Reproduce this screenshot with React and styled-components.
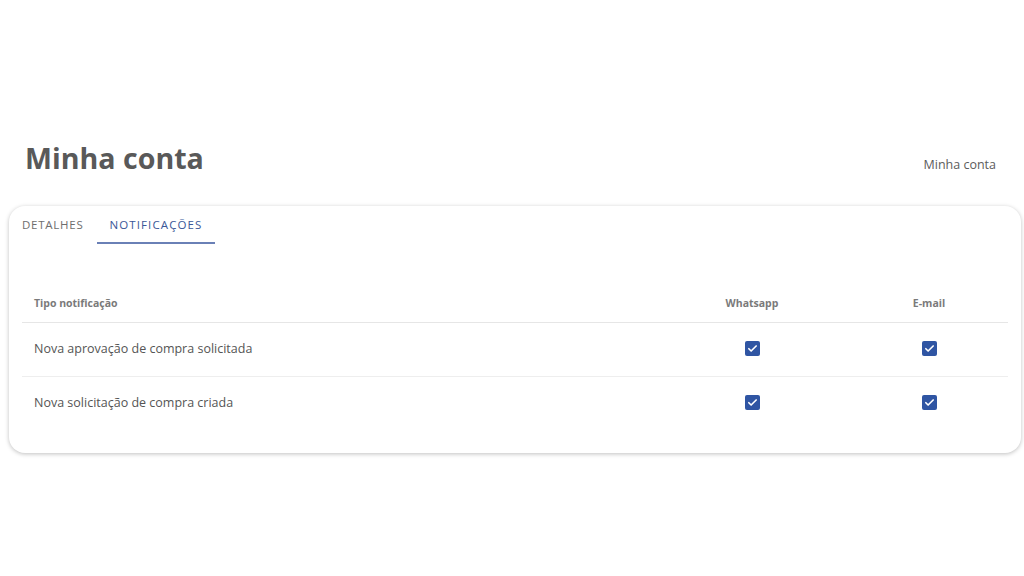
import styled, { createGlobalStyle } from 'styled-components'

const GlobalStyle = createGlobalStyle`
  html, body {
    margin: 0;
    padding: 0;
    background: #ffffff;
    font-family: 'Open Sans', 'Liberation Sans', sans-serif;
  }
`

const rows = [
  { label: 'Nova aprovação de compra solicitada', whatsapp: true, email: true },
  { label: 'Nova solicitação de compra criada', whatsapp: true, email: true },
]

const CheckIcon = () => (
  <svg width='11' height='11' viewBox='0 0 24 24' fill='none'>
    <path
      d='M4 12.5l5 5L20 6.5'
      stroke='#ffffff'
      strokeWidth='3.6'
      strokeLinecap='round'
      strokeLinejoin='round'
    />
  </svg>
)

const App = () => {
  return (
    <Page>
      <GlobalStyle />
      <Header>
        <Title>Minha conta</Title>
        <Breadcrumb>Minha conta</Breadcrumb>
      </Header>
      <Card>
        <Tabs>
          <Tab>DETALHES</Tab>
          <Tab active>NOTIFICAÇÕES</Tab>
        </Tabs>
        <Table>
          <HeadRow>
            <HeadCell>Tipo notificação</HeadCell>
            <HeadCell center>Whatsapp</HeadCell>
            <HeadCell center>E-mail</HeadCell>
          </HeadRow>
          {rows.map((row, i) => (
            <Row key={row.label} last={i === rows.length - 1}>
              <Cell>{row.label}</Cell>
              <Cell center>
                <Checkbox>{row.whatsapp && <CheckIcon />}</Checkbox>
              </Cell>
              <Cell center>
                <Checkbox>{row.email && <CheckIcon />}</Checkbox>
              </Cell>
            </Row>
          ))}
        </Table>
      </Card>
    </Page>
  )
}

export default App

const Page = styled.div`
  width: 1024px;
  height: 576px;
  box-sizing: border-box;
  padding: 135px 3px 0 9px;
`
const Header = styled.div`
  display: flex;
  justify-content: space-between;
  align-items: center;
  padding: 0 25px 0 16px;
  height: 44px;
`
const Title = styled.h1`
  margin: 0;
  font-size: 28.6px;
  font-weight: 700;
  color: #595959;
`
const Breadcrumb = styled.span`
  font-size: 12.5px;
  color: #5c5c5c;
  margin-top: 14px;
`
const Card = styled.div`
  margin-top: 27px;
  background: #ffffff;
  border-radius: 16px;
  box-shadow: 0 1px 4px rgba(0, 0, 0, 0.25);
  padding: 0 13px 22px 13px;
`
const Tabs = styled.div`
  display: flex;
  height: 38px;
  margin-left: -13px;
`
const Tab = styled.div`
  display: flex;
  align-items: center;
  justify-content: center;
  padding: 1px 13px 0 13px;
  font-size: 11.5px;
  font-weight: 500;
  letter-spacing: ${(p) => (p.active ? '1.1px' : '0.75px')};
  color: ${(p) => (p.active ? '#3a5798' : '#6e6e6e')};
  border-bottom: 2px solid ${(p) => (p.active ? '#6a80b6' : 'transparent')};
  box-sizing: border-box;
`
const Table = styled.div`
  margin-top: 40px;
`
const grid = `
  display: grid;
  grid-template-columns: 1fr 196px 158px;
  align-items: center;
  padding-left: 12px;
`
const HeadRow = styled.div`
  ${grid}
  height: 38px;
  border-bottom: 1px solid #e6e6e6;
`
const HeadCell = styled.div`
  font-size: 10.5px;
  font-weight: 700;
  color: #7a7a7a;
  text-align: ${(p) => (p.center ? 'center' : 'left')};
`
const Row = styled.div`
  ${grid}
  height: 54px;
  box-sizing: border-box;
  padding-bottom: 3px;
  border-bottom: 1px solid ${(p) => (p.last ? 'transparent' : '#eeeeee')};
`
const Cell = styled.div`
  font-size: 12.5px;
  color: #555555;
  display: flex;
  justify-content: ${(p) => (p.center ? 'center' : 'flex-start')};
  align-items: center;
`
const Checkbox = styled.span`
  width: 15px;
  height: 15px;
  border-radius: 2px;
  background: #2f55a3;
  display: flex;
  align-items: center;
  justify-content: center;
`
